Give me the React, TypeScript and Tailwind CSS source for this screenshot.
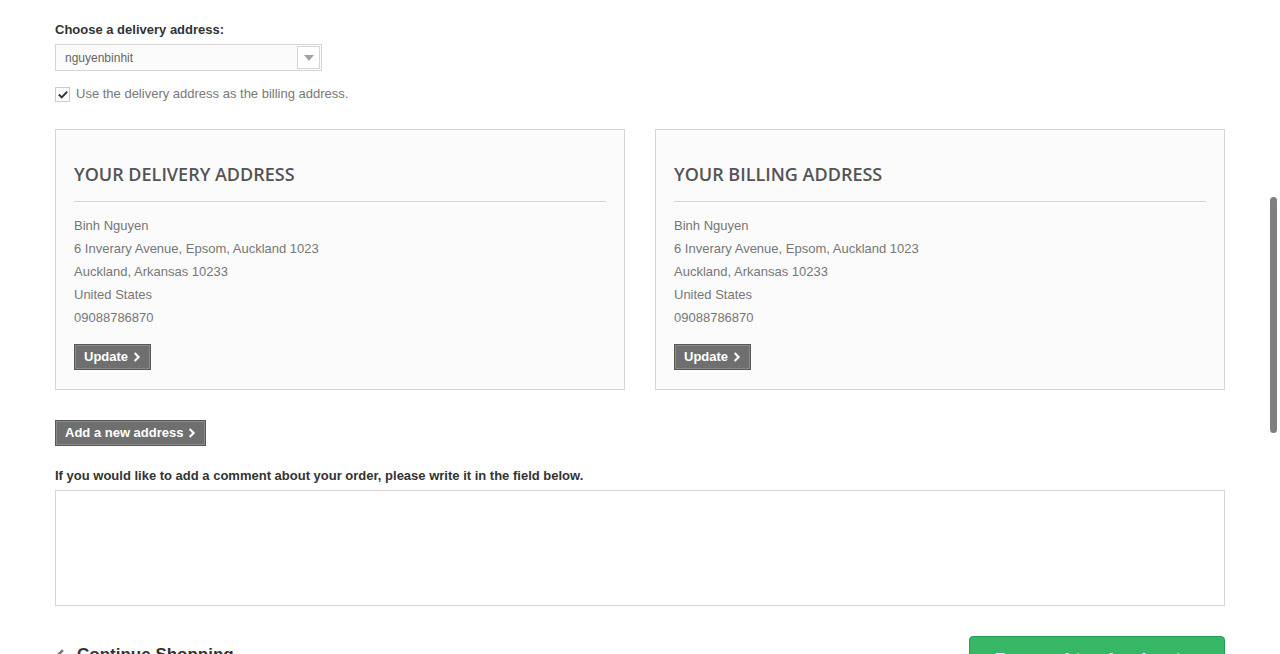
const Chevron = ({ className }: { className?: string }) => (
    <svg viewBox="0 0 10 12" className={className} fill="none" stroke="currentColor" strokeWidth="2.6" strokeLinecap="square">
        <polyline points="3,2 7,6 3,10" />
    </svg>
)

const SmallButton = ({ label }: { label: string }) => (
    <button className="inline-flex h-[26px] items-center border border-[#575757] bg-[#6f6f6f] text-[13px] font-bold text-white">
        <span className="flex h-full items-center gap-[5px] border border-[#8b8a8a] px-[8px]">
            {label}
            <Chevron className="h-[12px] w-[8px]" />
        </span>
    </button>
)

const lines = [
    "Binh Nguyen",
    "6 Inverary Avenue, Epsom, Auckland 1023",
    "Auckland, Arkansas 10233",
    "United States",
    "09088786870",
]

const AddressBox = ({ title }: { title: string }) => (
    <div className="border border-[#d6d4d4] bg-[#fbfbfb] px-[18px] pt-[18px] pb-[19px]">
        <h3 className="border-b border-[#d6d4d4] pt-[14px] pb-[15px] font-['Open_Sans',sans-serif] text-[18px] leading-6 font-semibold text-[#555454] uppercase">
            {title}
        </h3>
        <ul className="mt-[12px] leading-[23px]">
            {lines.map((l) => (
                <li key={l}>{l}</li>
            ))}
        </ul>
        <div className="mt-[15px] flex">
            <SmallButton label="Update" />
        </div>
    </div>
)

export default function App() {
    return (
        <div className="relative h-[654px] overflow-hidden bg-white font-['Liberation_Sans',Arial,sans-serif] text-[13px] leading-[18px] text-[#777]">
            <div className="mx-auto w-[1170px] pt-[21px]">
                <label className="block font-bold text-[#333]">Choose a delivery address:</label>
                <div className="mt-[5px] flex h-[27px] w-[267px] items-center justify-between border border-[#d6d4d4] bg-[#fbfbfb] pl-[9px] pr-[1px] text-[12px] text-[#666]">
                    <span>nguyenbinhit</span>
                    <span className="flex h-[23px] w-[23px] items-center justify-center border border-[#d6d4d4] bg-white">
                        <svg viewBox="0 0 10 6" className="h-[6px] w-[10px]">
                            <polygon points="0,0 10,0 5,6" fill="#a3a3a3" />
                        </svg>
                    </span>
                </div>
                <div className="mt-[14px] flex items-center gap-[6px]">
                    <span className="flex h-[15px] w-[15px] items-center justify-center border border-[#ccc] bg-white">
                        <svg viewBox="0 0 12 10" className="h-[9px] w-[10px]">
                            <polyline points="1,5 4.5,8.5 11,1.5" fill="none" stroke="#333" strokeWidth="2.4" />
                        </svg>
                    </span>
                    <span>Use the delivery address as the billing address.</span>
                </div>

                <div className="mt-[26px] grid grid-cols-2 gap-[30px]">
                    <AddressBox title="Your delivery address" />
                    <AddressBox title="Your billing address" />
                </div>

                <div className="mt-[30px] flex">
                    <SmallButton label="Add a new address" />
                </div>

                <p className="mt-[21px] font-bold text-[#333]">
                    If you would like to add a comment about your order, please write it in the field below.
                </p>
                <textarea className="mt-[5px] block h-[116px] w-full resize-none border border-[#d6d4d4] bg-white" />

                <div className="mt-[30px] flex items-start justify-between">
                    <a className="mt-[10px] flex items-center gap-[12px] text-[17px] font-bold text-[#333]">
                        <Chevron className="h-[16px] w-[10px] rotate-180 text-[#777]" />
                        Continue Shopping
                    </a>
                    <button className="flex h-[46px] w-[256px] items-center justify-center gap-[8px] rounded-[4px] border border-[#2b9c55] bg-[#36b766] pt-[2px] text-[19px] font-bold text-white">
                        Proceed to checkout
                        <Chevron className="h-[16px] w-[10px]" />
                    </button>
                </div>
            </div>
            <div className="absolute top-[197px] right-[3px] h-[236px] w-[7px] rounded-full bg-[#7f7f7f]" />
        </div>
    )
}
